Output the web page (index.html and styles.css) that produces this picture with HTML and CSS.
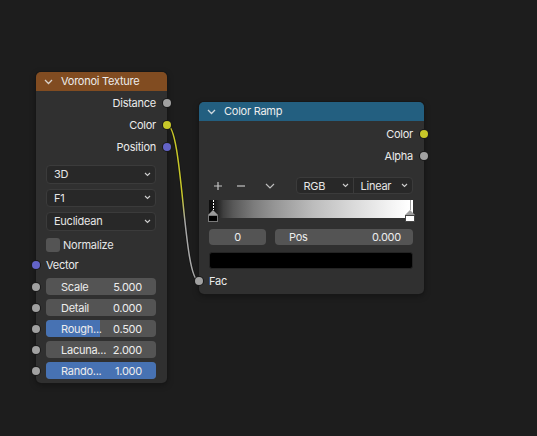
FILE: index.html
```html
<!DOCTYPE html>
<html>
<head>
<meta charset="utf-8">
<link rel="stylesheet" href="styles.css">
</head>
<body>
<div class="canvas">
  <svg class="links" width="537" height="436" viewBox="0 0 537 436">
    <defs>
      <linearGradient id="lg" gradientUnits="userSpaceOnUse" x1="0" y1="125" x2="0" y2="281">
        <stop offset="0.45" stop-color="#c7c729"/>
        <stop offset="0.62" stop-color="#a8a8a8"/>
      </linearGradient>
    </defs>
    <path d="M167,125 C183,125 183,281 199,281" fill="none" stroke="#161616" stroke-width="3.2"/>
    <path d="M167,125 C183,125 183,281 199,281" fill="none" stroke="url(#lg)" stroke-width="1.5"/>
  </svg>

  <div class="node voronoi">
    <div class="node-header hdr-tex">
      <svg class="collapse" width="9" height="6" viewBox="0 0 9 6"><polyline points="1,1 4.5,4.5 8,1" fill="none" stroke="#d9d2cb" stroke-width="1.3"/></svg>
      <span class="title">Voronoi Texture</span>
    </div>
    <div class="node-body">
      <div class="out-row r22">Distance<span class="socket s-gray"></span></div>
      <div class="out-row r22">Color<span class="socket s-yellow"></span></div>
      <div class="out-row r21">Position<span class="socket s-blue"></span></div>

      <div class="widget-row dd-first">
        <div class="dropdown"><span>3D</span><svg class="dd-chev" width="7" height="5" viewBox="0 0 7 5"><polyline points="1,1 3.5,3.5 6,1" fill="none" stroke="#cfcfcf" stroke-width="1.1"/></svg></div>
      </div>
      <div class="widget-row dd-next">
        <div class="dropdown"><span>F1</span><svg class="dd-chev" width="7" height="5" viewBox="0 0 7 5"><polyline points="1,1 3.5,3.5 6,1" fill="none" stroke="#cfcfcf" stroke-width="1.1"/></svg></div>
      </div>
      <div class="widget-row dd-next">
        <div class="dropdown"><span>Euclidean</span><svg class="dd-chev" width="7" height="5" viewBox="0 0 7 5"><polyline points="1,1 3.5,3.5 6,1" fill="none" stroke="#cfcfcf" stroke-width="1.1"/></svg></div>
      </div>

      <div class="widget-row check-row">
        <span class="checkbox"></span><span class="check-label">Normalize</span>
      </div>
      <div class="in-row vec-row">Vector<span class="socket s-blue"></span></div>

      <div class="widget-row slider-row first-slider"><span class="socket s-gray"></span>
        <div class="slider"><div class="fill" style="width:0%"></div><span class="lbl">Scale</span><span class="val">5.000</span></div>
      </div>
      <div class="widget-row slider-row"><span class="socket s-gray"></span>
        <div class="slider"><div class="fill" style="width:0%"></div><span class="lbl">Detail</span><span class="val">0.000</span></div>
      </div>
      <div class="widget-row slider-row"><span class="socket s-gray"></span>
        <div class="slider"><div class="fill" style="width:49%"></div><span class="lbl">Rough...</span><span class="val">0.500</span></div>
      </div>
      <div class="widget-row slider-row"><span class="socket s-gray"></span>
        <div class="slider"><div class="fill" style="width:0%"></div><span class="lbl">Lacuna...</span><span class="val">2.000</span></div>
      </div>
      <div class="widget-row slider-row"><span class="socket s-gray"></span>
        <div class="slider"><div class="fill" style="width:100%"></div><span class="lbl">Rando...</span><span class="val">1.000</span></div>
      </div>
    </div>
  </div>

  <div class="node ramp">
    <div class="node-header hdr-conv">
      <svg class="collapse" width="9" height="6" viewBox="0 0 9 6"><polyline points="1,1 4.5,4.5 8,1" fill="none" stroke="#cfd8de" stroke-width="1.3"/></svg>
      <span class="title">Color Ramp</span>
    </div>
    <div class="node-body">
      <div class="out-row r22 first-out">Color<span class="socket s-yellow"></span></div>
      <div class="out-row r21">Alpha<span class="socket s-gray"></span></div>

      <div class="widget-row ctrl-row">
        <span class="icon-btn"><svg width="10" height="10" viewBox="0 0 10 10"><path d="M5,1 V9 M1,5 H9" stroke="#c4c4c4" stroke-width="1.2" fill="none"/></svg></span>
        <span class="icon-btn minus"><svg width="10" height="10" viewBox="0 0 10 10"><path d="M1,5 H9" stroke="#c4c4c4" stroke-width="1.2" fill="none"/></svg></span>
        <span class="icon-btn chev"><svg width="10" height="6" viewBox="0 0 10 6"><polyline points="1,1 5,5 9,1" fill="none" stroke="#bdbdbd" stroke-width="1.2"/></svg></span>
        <div class="dd-group">
          <div class="dd-part rgb"><span>RGB</span><svg class="dd-chev" width="7" height="5" viewBox="0 0 7 5"><polyline points="1,1 3.5,3.5 6,1" fill="none" stroke="#cfcfcf" stroke-width="1.1"/></svg></div>
          <div class="dd-part linear"><span>Linear</span><svg class="dd-chev" width="7" height="5" viewBox="0 0 7 5"><polyline points="1,1 3.5,3.5 6,1" fill="none" stroke="#cfcfcf" stroke-width="1.1"/></svg></div>
        </div>
      </div>

      <div class="widget-row ramp-row">
        <div class="ramp-bar">
          <span class="marker m-left"><span class="m-line dashed"></span><span class="m-tri"></span><span class="m-box black"></span></span>
          <span class="marker m-right"><span class="m-line"></span><span class="m-tri"></span><span class="m-box white"></span></span>
        </div>
      </div>

      <div class="widget-row field-row">
        <div class="field idx">0</div>
        <div class="field pos"><span>Pos</span><span>0.000</span></div>
      </div>

      <div class="widget-row swatch-row">
        <div class="swatch"></div>
      </div>

      <div class="in-row fac-row">Fac<span class="socket s-gray"></span></div>
    </div>
  </div>
</div>
</body>
</html>
```
FILE: styles.css
```css
* { box-sizing: border-box; }
html, body { margin: 0; padding: 0; }
body {
  background: #1d1d1d;
  font-family: Inter, "Noto Sans", "DejaVu Sans", sans-serif;
  font-size: 11px;
  letter-spacing: -0.25px;
  color: #ebebeb;
}
.canvas {
  position: relative;
  width: 537px;
  height: 436px;
  overflow: hidden;
  background: #1d1d1d;
}
.links { position: absolute; left: 0; top: 0; }

.node {
  position: absolute;
  background: #303030;
  border-radius: 5px;
  box-shadow: 0 0 0 1px #171717, 0 2px 6px rgba(0,0,0,0.35);
}
.voronoi { left: 36px; top: 72px; width: 131px; height: 311px; }
.ramp { left: 199px; top: 102px; width: 225px; height: 192px; }

.node-header {
  height: 19px;
  display: flex;
  align-items: center;
  border-radius: 5px 5px 0 0;
  color: #ededed;
}
.hdr-tex { background: #814c21; }
.hdr-conv { background: #235f80; }
.collapse { margin-left: 8px; margin-right: 8px; }
.title { line-height: 19px; }

.node-body { display: flex; flex-direction: column; }

.out-row {
  position: relative;
  display: flex;
  align-items: center;
  justify-content: flex-end;
  padding-right: 11px;
}
.r22 { height: 22px; }
.r21 { height: 21px; }
.first-out { margin-top: 2px; }
.voronoi .out-row:first-child { margin-top: 1px; }

.in-row {
  position: relative;
  display: flex;
  align-items: center;
  padding-left: 10px;
}

.socket {
  position: absolute;
  width: 8px;
  height: 8px;
  top: 50%;
  margin-top: -4px;
  border-radius: 50%;
  box-shadow: 0 0 0 1px #1a1a1a;
}
.out-row .socket { right: -4px; }
.in-row .socket, .slider-row .socket { left: -4px; }
.s-gray { background: #a1a1a1; }
.s-yellow { background: #c7c729; }
.s-blue { background: #6363c7; }

.widget-row {
  position: relative;
  display: flex;
  align-items: center;
  padding: 0 11px 0 10px;
}

.dd-first { margin-top: 8px; }
.dd-next { margin-top: 5px; }
.dropdown {
  flex: 1;
  height: 18.5px;
  background: #282828;
  border: 1px solid #3b3b3b;
  border-radius: 4px;
  display: flex;
  align-items: center;
  justify-content: space-between;
  padding: 0 4px 0 7px;
  color: #e6e6e6;
}

.check-row { height: 20px; margin-top: 4px; }
.checkbox {
  width: 14px;
  height: 14px;
  background: #545454;
  border-radius: 3px;
  margin-right: 3px;
}
.check-label { color: #e6e6e6; }
.vec-row { height: 21px; padding-left: 10px; }

.slider-row { height: 17px; margin-top: 4px; }
.first-slider { margin-top: 2.5px; }
.slider {
  position: relative;
  flex: 1;
  height: 17px;
  background: #545454;
  border-radius: 4px;
  overflow: hidden;
  display: flex;
  align-items: center;
  justify-content: space-between;
  padding: 0 14px 0 15px;
  color: #ededed;
}
.fill { position: absolute; left: 0; top: 0; bottom: 0; background: #4772b3; }
.lbl, .val { position: relative; }

.ctrl-row { height: 18px; margin-top: 10.5px; }
.icon-btn {
  width: 17px;
  height: 18px;
  display: flex;
  align-items: center;
  justify-content: center;
}
.minus { margin-left: 6px; }
.chev { margin-left: 12px; }
.dd-group {
  margin-left: auto;
  width: 117.5px;
  height: 17.5px;
  display: flex;
  background: #282828;
  border: 1px solid #3b3b3b;
  border-radius: 4px;
  color: #e6e6e6;
}
.dd-part {
  display: flex;
  align-items: center;
  justify-content: space-between;
  padding: 0 4px 0 7px;
}
.rgb { width: 57px; border-right: 1px solid #3b3b3b; }
.linear { flex: 1; }

.ramp-row { height: 22px; margin-top: 5.5px; align-items: flex-start; }
.ramp-bar {
  position: relative;
  flex: 1;
  height: 18px;
  background: linear-gradient(to right, #0e0e0e 2%, #3f3f3f 7%, #595959 12%, #7c7c7c 22%, #959595 32%, #bcbcbc 51%, #dadada 71%, #f2f2f2 88%, #ffffff 98%);
}
.marker {
  position: absolute;
  top: 0;
  width: 10px;
  height: 22px;
  display: flex;
  flex-direction: column;
  align-items: center;
}
.m-left { left: -1px; }
.m-right { right: -2px; }
.m-line { width: 1px; height: 10px; background: #9a9a9a; }
.m-line.dashed { background: repeating-linear-gradient(to bottom, #ffffff 0 2px, #000 2px 3px); }
.m-tri {
  width: 0;
  height: 0;
  border-left: 5px solid transparent;
  border-right: 5px solid transparent;
  border-bottom: 5px solid #9c9c9c;
}
.m-box { width: 10px; height: 7px; border: 1px solid #7a7a7a; }
.m-box.black { background: #000; }
.m-box.white { background: #fff; border-color: #444; }

.field-row { height: 16px; margin-top: 7px; gap: 9px; }
.field {
  height: 16px;
  background: #545454;
  border-radius: 4px;
  display: flex;
  align-items: center;
  color: #ededed;
}
.idx { width: 57px; justify-content: center; }
.pos { flex: 1; justify-content: space-between; padding: 0 12px 0 14px; }

.swatch-row { height: 17.5px; margin-top: 6.5px; }
.swatch {
  flex: 1;
  height: 17.5px;
  background: #000;
  border: 1px solid #242424;
  border-radius: 3px;
}
.fac-row { height: 20px; margin-top: 2px; padding-left: 10px; }
```
